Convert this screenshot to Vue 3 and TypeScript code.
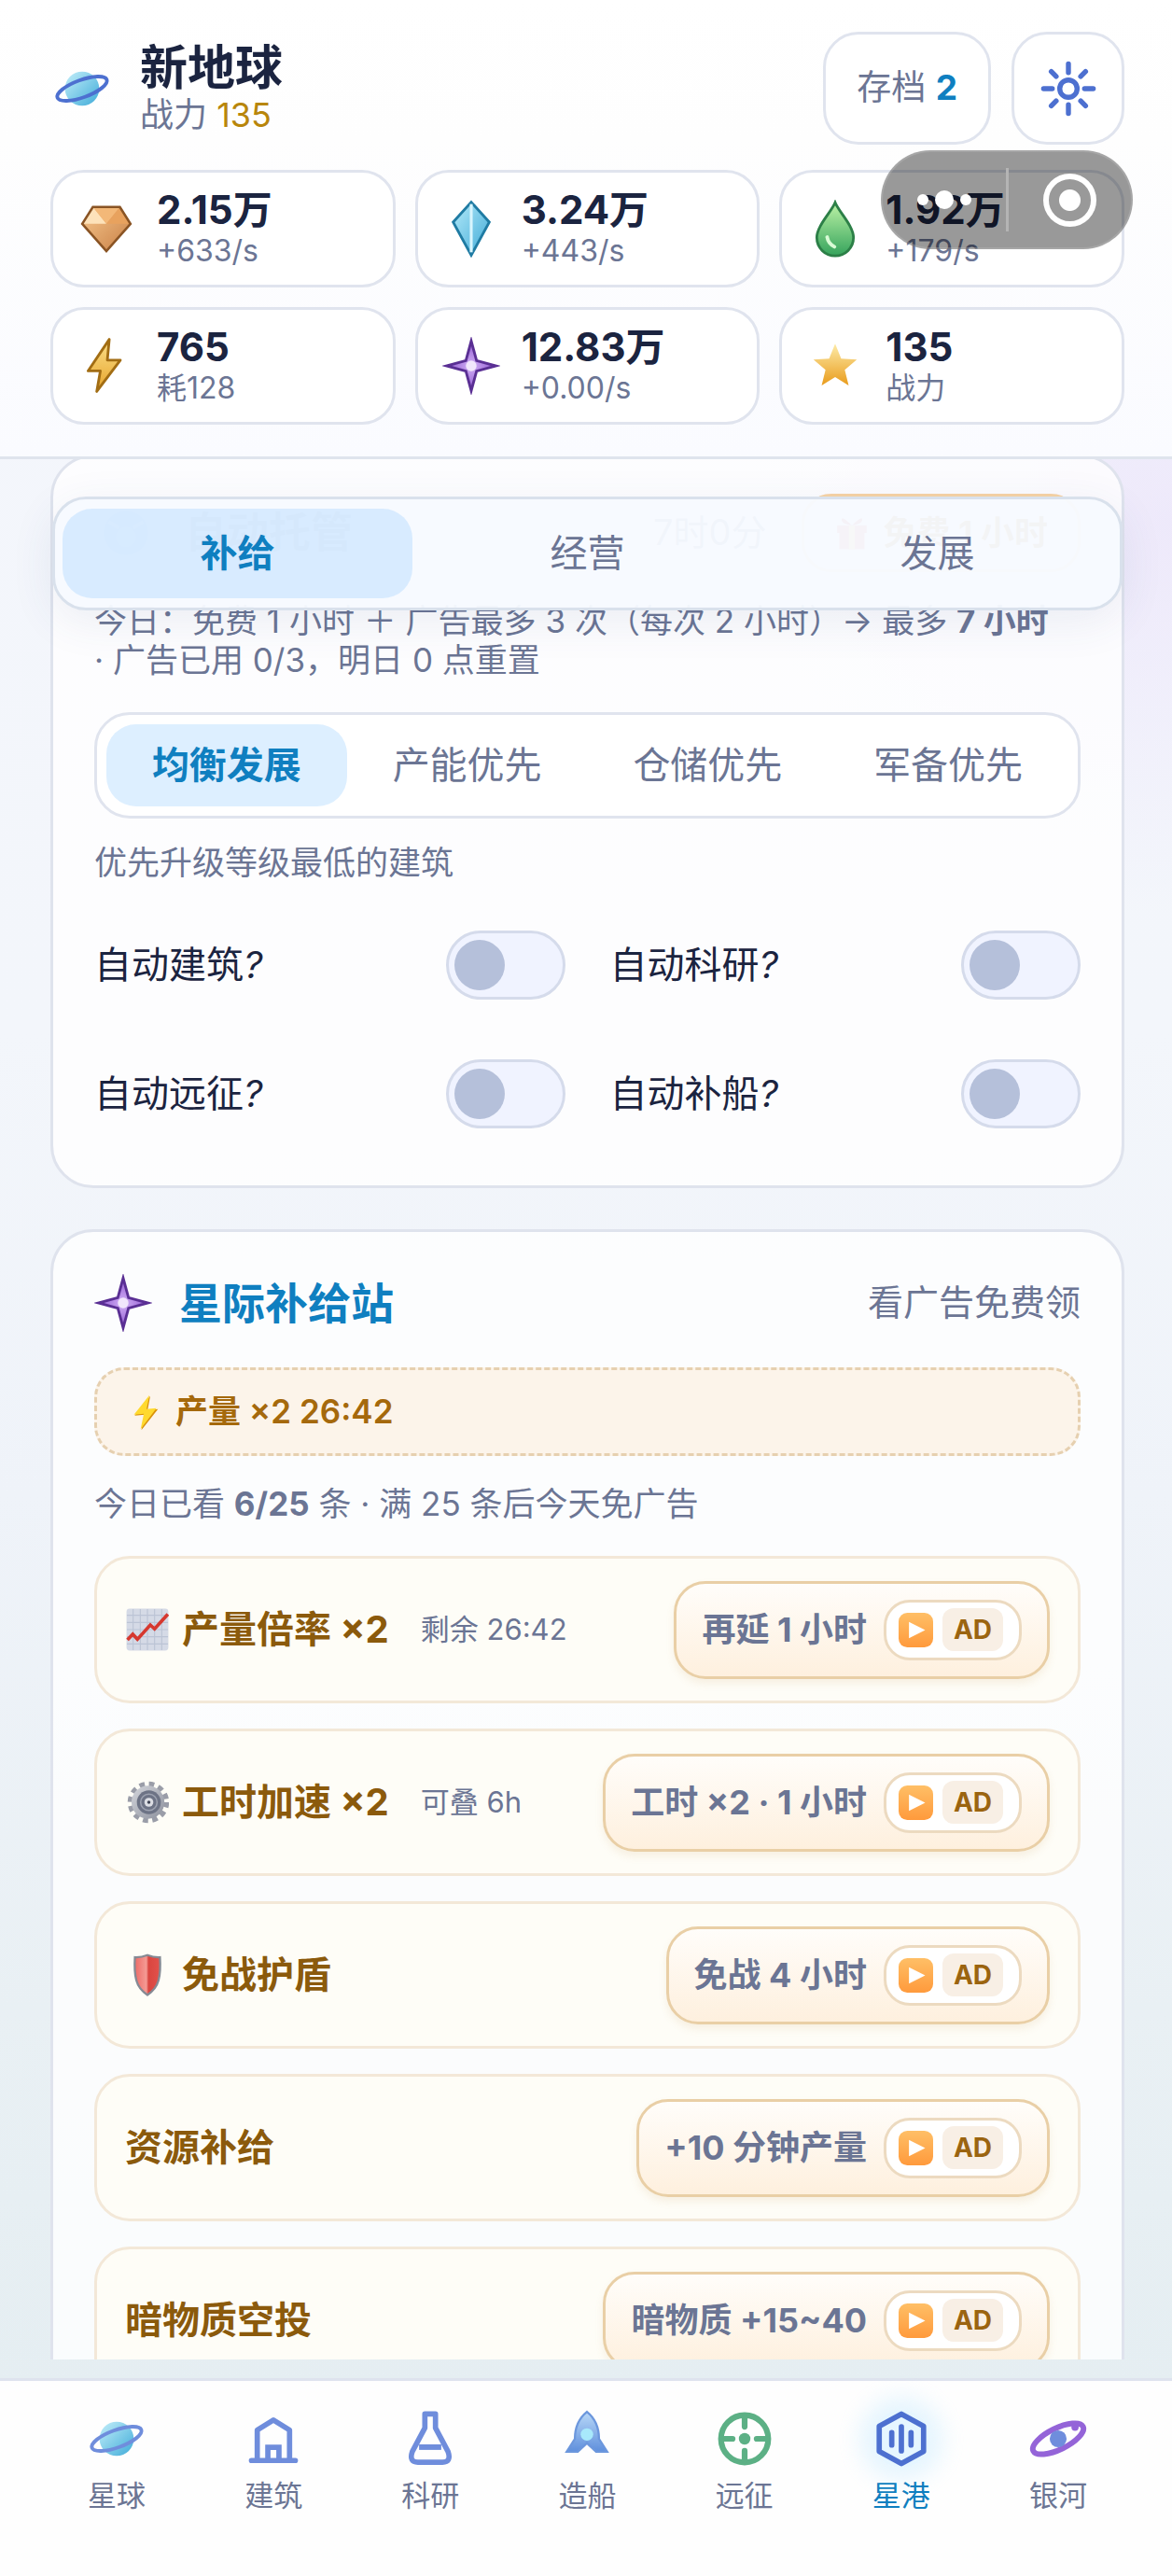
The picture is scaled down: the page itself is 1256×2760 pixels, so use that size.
<script setup lang="ts">
import { reactive, ref } from 'vue'

interface Resource { icon: string; value: string; note: string }
interface Supply { icon?: string; title: string; note?: string; action: string }
interface NavItem { icon: string; label: string }

const resources: Resource[] = [
  { icon: 'gem', value: '2.15万', note: '+633/s' },
  { icon: 'crystal', value: '3.24万', note: '+443/s' },
  { icon: 'drop', value: '1.92万', note: '+179/s' },
  { icon: 'bolt', value: '765', note: '耗128' },
  { icon: 'nova', value: '12.83万', note: '+0.00/s' },
  { icon: 'star', value: '135', note: '战力' },
]

const tabs = ['补给', '经营', '发展']
const activeTab = ref('补给')

const strategies = ['均衡发展', '产能优先', '仓储优先', '军备优先']
const activeStrategy = ref('均衡发展')

const switches = reactive([
  { label: '自动建筑', on: false },
  { label: '自动科研', on: false },
  { label: '自动远征', on: false },
  { label: '自动补船', on: false },
])

const supplies: Supply[] = [
  { icon: 'chart', title: '产量倍率 ×2', note: '剩余 26:42', action: '再延 1 小时' },
  { icon: 'cog', title: '工时加速 ×2', note: '可叠 6h', action: '工时 ×2 · 1 小时' },
  { icon: 'shield', title: '免战护盾', action: '免战 4 小时' },
  { title: '资源补给', action: '+10 分钟产量' },
  { title: '暗物质空投', action: '暗物质 +15~40' },
]

const navItems: NavItem[] = [
  { icon: 'planet', label: '星球' },
  { icon: 'building', label: '建筑' },
  { icon: 'flask', label: '科研' },
  { icon: 'rocket', label: '造船' },
  { icon: 'target', label: '远征' },
  { icon: 'port', label: '星港' },
  { icon: 'galaxy', label: '银河' },
]
const activeNav = ref('星港')
</script>

<template>
  <div class="app">
    <svg class="sprite" aria-hidden="true">
      <defs>
        <linearGradient id="g-planet" x1="0" y1="0" x2="1" y2="1">
          <stop offset="0" stop-color="#c4effa" /><stop offset="1" stop-color="#3fabd8" />
        </linearGradient>
        <linearGradient id="g-gem" x1="0" y1="0" x2="1" y2="1">
          <stop offset="0" stop-color="#f7c88e" /><stop offset="1" stop-color="#c87f45" />
        </linearGradient>
        <linearGradient id="g-crystal" x1="0" y1="0" x2="1" y2="1">
          <stop offset="0" stop-color="#b5ebfa" /><stop offset="1" stop-color="#3fa9d6" />
        </linearGradient>
        <linearGradient id="g-drop" x1="0" y1="0" x2="0" y2="1">
          <stop offset="0" stop-color="#bdf3a6" /><stop offset="1" stop-color="#35a35c" />
        </linearGradient>
        <linearGradient id="g-bolt" x1="0" y1="0" x2="0" y2="1">
          <stop offset="0" stop-color="#fbe08a" /><stop offset="1" stop-color="#e6a32a" />
        </linearGradient>
        <radialGradient id="g-nova">
          <stop offset="0" stop-color="#d2b0f6" /><stop offset="1" stop-color="#8f58cf" />
        </radialGradient>
        <linearGradient id="g-star" x1="0" y1="0" x2="0" y2="1">
          <stop offset="0" stop-color="#fdeba8" /><stop offset="1" stop-color="#e99c1c" />
        </linearGradient>
        <linearGradient id="g-rocket" x1="0" y1="0" x2="0" y2="1">
          <stop offset="0" stop-color="#b9d9f8" /><stop offset="1" stop-color="#5f8fdc" />
        </linearGradient>
        <linearGradient id="g-play" x1="0" y1="0" x2="0" y2="1">
          <stop offset="0" stop-color="#ffbf66" /><stop offset="1" stop-color="#ff9a3c" />
        </linearGradient>
        <linearGradient id="g-shield" x1="0" y1="0" x2="1" y2="0">
          <stop offset="0" stop-color="#ee6a66" /><stop offset=".46" stop-color="#f49b94" />
          <stop offset=".54" stop-color="#d9453f" /><stop offset="1" stop-color="#e2524c" />
        </linearGradient>
        <linearGradient id="g-cog" x1="0" y1="0" x2="1" y2="1">
          <stop offset="0" stop-color="#d4d6dc" /><stop offset="1" stop-color="#8d919d" />
        </linearGradient>
      </defs>
      <symbol id="i-planet" viewBox="0 0 24 24">
        <circle cx="12" cy="12" r="7.1" fill="url(#g-planet)" />
        <ellipse cx="12" cy="12" rx="10.9" ry="3.6" transform="rotate(-20 12 12)" fill="none" stroke="currentColor" stroke-width="1.5" />
      </symbol>
      <symbol id="i-gem" viewBox="0 0 24 24">
        <path d="M6.4 3h11.2L22 10 12 21.3 2 10z" fill="url(#g-gem)" />
        <path d="M6.4 3L12 10H2z" fill="#fde2ba" />
        <path d="M6.4 3h11.2L12 10z" fill="#f3b878" />
        <path d="M17.6 3L22 10H12z" fill="#e8a25e" />
        <path d="M6.4 3h11.2L22 10 12 21.3 2 10z" fill="none" stroke="#8a5424" stroke-width="1" />
      </symbol>
      <symbol id="i-crystal" viewBox="0 0 24 24">
        <path d="M12 1l7.5 8.3L12 23 4.5 9.3z" fill="url(#g-crystal)" stroke="#1f7ba3" stroke-width="1.1" />
        <path d="M12 1.8v20" stroke="#d8f5fd" stroke-width="1.2" />
      </symbol>
      <symbol id="i-drop" viewBox="0 0 24 24">
        <path d="M12 1.2C10.5 5 4.4 10.8 4.4 15.7a7.6 7.6 0 0 0 15.2 0C19.6 10.8 13.5 5 12 1.2z" fill="url(#g-drop)" stroke="#2c7f47" stroke-width="1.1" />
        <path d="M8.7 15.5q.4 2.7 3 4" fill="none" stroke="#d9fbd5" stroke-width="1.5" stroke-linecap="round" />
      </symbol>
      <symbol id="i-bolt" viewBox="0 0 24 24">
        <path d="M13.2 1l-.8 8.6h5.4L8 22.6l1.5-8.5H4.4z" fill="url(#g-bolt)" stroke="#a26d13" stroke-width="1.1" stroke-linejoin="round" />
      </symbol>
      <symbol id="i-nova" viewBox="-1 -1 26 26">
        <path d="M12 .8l2.4 8.8 8.8 2.4-8.8 2.4L12 23.2l-2.4-8.8L.8 12l8.8-2.4z" fill="url(#g-nova)" stroke="#5a2f94" stroke-width="1.2" stroke-miterlimit="10" />
        <circle cx="12" cy="12" r="2.4" fill="#f1e6fc" />
      </symbol>
      <symbol id="i-star" viewBox="0 0 24 24">
        <path d="M12 2.8l2.5 6.2 6.5.4-5 4.2 1.6 6.5L12 16.6l-5.6 3.5L8 13.6 3 9.4l6.500-.4z" fill="url(#g-star)" />
      </symbol>
      <symbol id="i-gear" viewBox="0 0 24 24">
        <g fill="none" stroke="currentColor" stroke-width="2.1" stroke-linecap="round">
          <circle cx="12" cy="12" r="3.6" />
          <path d="M12 1.7v3.600M12 18.7v3.600M1.7 12h3.600M18.7 12h3.600M4.900 4.900l2 2M17.100 17.100l2 2M4.900 19.100l2-2M17.100 6.900l2-2" />
        </g>
      </symbol>
      <symbol id="i-building" viewBox="0 0 24 24">
        <g fill="none" stroke="currentColor" stroke-width="2.2" stroke-linecap="round" stroke-linejoin="round">
          <path d="M5.300 20.800V8.400L12 4.200l6.700 4.200v12.400M2.900 21h18.200" />
          <path d="M9.700 20.500v-5h4.600v5" stroke-linejoin="miter" />
        </g>
      </symbol>
      <symbol id="i-flask" viewBox="0 0 24 24">
        <path d="M9.800 1.700h4.400v5.800l5.200 9.800q1.500 4.400-2.300 4.400H6.900q-3.800 0-2.300-4.400l5.200-9.800z" fill="none" stroke="currentColor" stroke-width="2.2" stroke-linejoin="round" />
        <path d="M7.400 14.300h9.200v2.300H7.400z" fill="currentColor" />
      </symbol>
      <symbol id="i-rocket" viewBox="0 0 24 24">
        <path d="M12 .8C8.500 3.600 7 7.800 7 12L3.600 17.400h4.600L12 13.800l3.800 3.600h4.600L17 12c0-4.200-1.500-8.400-5-11.200z" fill="url(#g-rocket)" stroke="#6c97dd" stroke-width=".9" />
        <circle cx="12" cy="10.200" r="2.600" fill="#a8e9fb" />
      </symbol>
      <symbol id="i-target" viewBox="0 0 24 24">
        <g fill="none" stroke="#5cb085" stroke-width="2.4">
          <circle cx="12" cy="12" r="9.800" />
          <path d="M12 3v4M12 17v4M3 12h4M17 12h4" stroke-linecap="round" />
        </g>
        <circle cx="12" cy="12" r="2.400" fill="#5cb085" />
      </symbol>
      <symbol id="i-port" viewBox="0 0 24 24">
        <g fill="none" stroke="#4d70d0" stroke-width="2.2" stroke-linejoin="round" stroke-linecap="round">
          <path d="M12 1.700l9.200 5.100v10.400L12 22.300l-9.200-5.100V6.800z" />
          <path d="M12 7v10M8 9.400v5.200M16 9.400v5.200" />
        </g>
      </symbol>
      <symbol id="i-galaxy" viewBox="0 0 24 24">
        <ellipse cx="12" cy="12" rx="11.500" ry="4.400" transform="rotate(-26 12 12)" fill="none" stroke="#9464d8" stroke-width="2.3" />
        <circle cx="12" cy="12" r="3.500" fill="#6f8ddc" />
        <circle cx="19" cy="7.200" r="1.500" fill="#9464d8" />
      </symbol>
      <symbol id="i-spark" viewBox="0 0 24 24">
        <path d="M14.500 1L4.500 13.600l6.400-.6L8.800 23l10.700-13.600-6.700.8z" fill="#d9920a" transform="translate(.5 .6)" />
        <path d="M14.500 1L4.500 13.600l6.400-.6L8.800 23l10.200-13.600-6.400.6z" fill="#ffd92e" />
      </symbol>
      <symbol id="i-chart" viewBox="0 0 24 24">
        <rect x=".3" y=".3" width="23.4" height="23.4" rx="1.8" fill="#d5dae6" />
        <path d="M4 .5v23M8 .5v23M12 .5v23M16 .5v23M20 .5v23M.5 4h23M.5 8h23M.5 12h23M.5 16h23M.5 20h23" stroke="#bcc4d5" stroke-width=".6" />
        <path d="M.8 17.800L3.800 14.600 6.400 17.400 13.600 9.400 16 11.600 23.400 3.400" fill="none" stroke="#d6382f" stroke-width="1.9" />
      </symbol>
      <symbol id="i-cog" viewBox="0 0 24 24">
        <circle cx="12.500" cy="12" r="10" fill="none" stroke="#9a9da8" stroke-width="3.2" stroke-dasharray="2.900 2.340" />
        <circle cx="12.300" cy="12" r="9.200" fill="url(#g-cog)" />
        <circle cx="12.800" cy="12" r="6.700" fill="#6d7385" />
        <circle cx="12.800" cy="12" r="4.600" fill="none" stroke="#9da2b0" stroke-width=".8" />
        <circle cx="12.800" cy="12" r="2.500" fill="#dcdee4" />
        <circle cx="12.800" cy="12" r=".9" fill="#3f4454" />
      </symbol>
      <symbol id="i-shield" viewBox="0 0 24 24">
        <path d="M12 .9q3.600 1.400 7 1.200.5 8-.8 12.900T12 23.200q-4.900-3.300-6.200-8.200T5 2.100Q8.400 2.300 12 .9z" fill="url(#g-shield)" stroke="#858a94" stroke-width="1.2" />
      </symbol>
      <symbol id="i-robot" viewBox="0 0 24 24">
        <circle cx="12" cy="12" r="11" fill="#5c7fd8" />
        <path d="M3.500 6.500l5 3M20.500 6.500l-5 3" stroke="#fff" stroke-width="1.8" />
        <circle cx="12" cy="14" r="5" fill="#b9cdf5" />
      </symbol>
      <symbol id="i-gift" viewBox="0 0 24 24">
        <path d="M2 7h20v5H2zM3.500 12h17v11h-17z" fill="#e0554f" />
        <path d="M10 7h4v16h-4z" fill="#f3c64c" />
        <path d="M12 7Q5 6 5 3t7 4q7-7 7-4t-7 4z" fill="#c8413c" />
      </symbol>
      <symbol id="i-play" viewBox="0 0 24 24">
        <rect width="24" height="24" rx="6" fill="url(#g-play)" />
        <path d="M7.200 6.400v11.200L18.500 12z" fill="#fff" />
      </symbol>
    </svg>

    <header class="top">
      <div class="brand-row">
        <svg class="icon brand-icon"><use href="#i-planet" /></svg>
        <div class="brand">
          <h1>新地球</h1>
          <p>战力 <span class="gold">135</span></p>
        </div>
        <button class="box-btn save" type="button">存档 <b>2</b></button>
        <button class="box-btn gear" type="button" aria-label="设置">
          <svg class="icon"><use href="#i-gear" /></svg>
        </button>
      </div>
      <ul class="resources">
        <li v-for="r in resources" :key="r.icon">
          <svg class="icon"><use :href="'#i-' + r.icon" /></svg>
          <div>
            <strong>{{ r.value }}</strong>
            <small>{{ r.note }}</small>
          </div>
        </li>
      </ul>
      <div class="capsule">
        <button type="button" aria-label="更多">
          <i class="dot"></i><i class="dot big"></i><i class="dot"></i>
        </button>
        <span class="bar"></span>
        <button type="button" aria-label="关闭"><i class="ring"></i></button>
      </div>
    </header>

    <main class="stage">
      <div class="scroll">
        <section class="card auto">
          <div class="auto-head">
            <svg class="robot"><use href="#i-robot" /></svg>
            <h2>自动托管</h2>
            <span class="remain">7时0分</span>
            <button class="free" type="button">
              <svg><use href="#i-gift" /></svg>免费 1 小时
            </button>
          </div>
          <p class="hint rule">今日：免费 1 小时 ＋ 广告最多 3 次（每次 2 小时）→ 最多 <b>7 小时</b><br>· 广告已用 0/3，明日 0 点重置</p>
          <div class="segment">
            <button
              v-for="s in strategies" :key="s" type="button"
              :class="{ active: s === activeStrategy }" @click="activeStrategy = s"
            >{{ s }}</button>
          </div>
          <p class="hint">优先升级等级最低的建筑</p>
          <div class="switches">
            <label v-for="s in switches" :key="s.label">
              <span>{{ s.label }}<em>?</em></span>
              <input v-model="s.on" type="checkbox">
            </label>
          </div>
        </section>

        <section class="card supply">
          <div class="supply-head">
            <svg class="icon"><use href="#i-nova" /></svg>
            <h2>星际补给站</h2>
            <span>看广告免费领</span>
          </div>
          <div class="buff"><svg><use href="#i-spark" /></svg>产量 ×2 26:42</div>
          <p class="hint">今日已看 <b>6/25</b> 条 · 满 25 条后今天免广告</p>
          <ul class="offers">
            <li v-for="o in supplies" :key="o.title">
              <svg v-if="o.icon"><use :href="'#i-' + o.icon" /></svg>
              <strong>{{ o.title }}</strong>
              <small v-if="o.note">{{ o.note }}</small>
              <button type="button">
                {{ o.action }}
                <span class="ad"><svg><use href="#i-play" /></svg><span>AD</span></span>
              </button>
            </li>
          </ul>
        </section>
      </div>

      <div class="tabs">
        <button
          v-for="t in tabs" :key="t" type="button"
          :class="{ active: t === activeTab }" @click="activeTab = t"
        >{{ t }}</button>
      </div>
    </main>

    <nav class="nav">
      <a
        v-for="n in navItems" :key="n.label" href="#"
        :class="{ active: n.label === activeNav }" @click.prevent="activeNav = n.label"
      >
        <svg class="icon"><use :href="'#i-' + n.icon" /></svg>
        <span>{{ n.label }}</span>
      </a>
    </nav>
  </div>
</template>

<style>
body {
  margin: 0;
}
</style>

<style scoped>
.app {
  display: flex;
  flex-direction: column;
  height: 100vh;
  overflow: hidden;
  color: #1b2440;
  font-family: Inter, "Noto Sans CJK SC", sans-serif;
  line-height: 1.25;
  background:
    radial-gradient(ellipse 560px 420px at 100% 560px, rgba(232, 220, 250, .5), rgba(232, 220, 250, 0)),
    linear-gradient(180deg, #f4f6fc 0, #f3f6fb 40%, #eff3f9 58%, #e9f0f4 78%, #e3edf1 100%);
}
.app * {
  box-sizing: border-box;
}
h1, h2, p, ul {
  margin: 0;
  padding: 0;
  list-style: none;
}
button {
  margin: 0;
  padding: 0;
  border: 0;
  background: none;
  color: inherit;
  font: inherit;
  cursor: pointer;
}
.sprite {
  position: absolute;
  width: 0;
  height: 0;
}
.icon {
  flex: none;
  width: 62px;
  height: 62px;
  overflow: visible;
}

/* header */
.top {
  position: relative;
  flex: none;
  padding: 34px 51px 34px 54px;
  border-bottom: 3px solid #dfe4ed;
  background: linear-gradient(180deg, #fff 0, #fefefe 30%, #fafbff 100%);
}
.brand-row {
  display: flex;
  align-items: center;
  margin-bottom: 27px;
}
.brand-icon {
  margin: 0 31px 0 3px;
  color: #4d70d0;
}
.brand {
  flex: 1;
}
.brand h1 {
  font-size: 51px;
  line-height: 56px;
  font-weight: 700;
}
.brand p {
  font-size: 36px;
  line-height: 44px;
  color: #6b7594;
}
.gold {
  color: #b8860b;
}
.box-btn {
  height: 121px;
  border: 3px solid #e0e4ee;
  border-radius: 38px;
  background: #fff;
}
.save {
  padding: 0 33px;
  color: #6b7594;
  font-size: 37px;
}
.save b {
  color: #0f7fc0;
}
.gear {
  display: grid;
  place-items: center;
  width: 121px;
  margin-left: 22px;
  color: #4d70d0;
}
.resources {
  display: grid;
  grid-template-columns: repeat(3, 1fr);
  gap: 21px;
}
.resources li {
  display: flex;
  align-items: center;
  gap: 23px;
  height: 126px;
  padding: 0 26px;
  border: 3px solid #e0e4ee;
  border-radius: 36px;
  background: #fff;
}
.resources strong {
  display: block;
  font-size: 42px;
  line-height: 48px;
}
.resources small {
  display: block;
  font-size: 32px;
  line-height: 40px;
  color: #6b7594;
}
.capsule {
  position: absolute;
  top: 161px;
  right: 42px;
  display: flex;
  align-items: center;
  width: 270px;
  height: 106px;
  border: 2px solid rgba(190, 190, 190, .35);
  border-radius: 53px;
  background: rgba(0, 0, 0, .4);
}
.capsule button {
  flex: 1;
  display: flex;
  align-items: center;
  justify-content: center;
  gap: 7px;
}
.capsule .bar {
  width: 3px;
  height: 68px;
  background: #b4b4b4;
}
.dot {
  width: 12px;
  height: 12px;
  border-radius: 50%;
  background: #fff;
}
.dot.big {
  width: 20px;
  height: 20px;
}
.ring {
  width: 57px;
  height: 57px;
  border: 6px solid #fff;
  border-radius: 50%;
  background: radial-gradient(circle, #fff 11px, transparent 12px);
}

/* scrolling area */
.stage {
  position: relative;
  flex: 1;
  min-height: 0;
  margin-bottom: 20px;
}
.scroll {
  height: 100%;
  padding: 0 51px 0 54px;
  overflow-y: auto;
  scrollbar-width: none;
}
.card {
  padding: 0 44px;
  border: 3px solid #dfe3ed;
  border-radius: 46px;
  background: rgba(255, 255, 255, .8);
}
.tabs {
  position: absolute;
  top: 40px;
  left: 56px;
  right: 53px;
  display: flex;
  padding: 10px 8px;
  border: 3px solid #d9e1ec;
  border-radius: 36px;
  background: rgba(247, 250, 255, .96);
  box-shadow: 0 12px 48px rgba(60, 80, 130, .09);
}
.tabs button {
  flex: 1;
  height: 96px;
  border-radius: 32px;
  font-size: 40px;
  color: #6b7594;
}
.tabs .active {
  background: rgba(199, 228, 255, .65);
  color: #0f7fc0;
  font-weight: 700;
}
.auto {
  margin-top: -5px;
  padding-top: 39px;
  padding-bottom: 61px;
}
.auto-head {
  display: flex;
  align-items: center;
  height: 84px;
  margin-bottom: 31px;
}
.robot {
  width: 52px;
  height: 52px;
  margin: 0 37px 0 8px;
}
.auto-head h2 {
  flex: 1;
  font-size: 45px;
}
.remain {
  margin-right: 38px;
  font-size: 38px;
  color: #6b7594;
}
.free {
  display: flex;
  align-items: center;
  gap: 14px;
  height: 84px;
  padding: 0 32px;
  border: 3px solid #f7d3a4;
  border-radius: 32px;
  font-size: 36px;
  font-weight: 700;
  color: #a0650c;
}
.free svg {
  width: 38px;
  height: 38px;
}
.hint {
  font-size: 35px;
  line-height: 42px;
  color: #6b7594;
}
.rule {
  white-space: nowrap;
}
.segment {
  display: flex;
  margin: 35px 0 26px;
  padding: 10px;
  border: 3px solid #e0e4ee;
  border-radius: 38px;
  background: #fff;
}
.segment button {
  flex: 1;
  height: 88px;
  border-radius: 32px;
  font-size: 40px;
  color: #6b7594;
}
.segment .active {
  background: #ddefff;
  color: #0f7fc0;
  font-weight: 700;
}
.switches {
  display: grid;
  grid-template-columns: 1fr 1fr;
  gap: 64px 48px;
  margin-top: 52px;
}
.switches label {
  display: flex;
  align-items: center;
  justify-content: space-between;
  height: 74px;
  font-size: 40px;
}
.switches input {
  appearance: none;
  display: flex;
  align-items: center;
  width: 128px;
  height: 74px;
  margin: 0;
  padding: 0 6px;
  border: 3px solid #d5dbeb;
  border-radius: 37px;
  background: #f0f3ff;
}
.switches input::before {
  content: "";
  width: 54px;
  height: 54px;
  border-radius: 50%;
  background: #b5c0da;
}
.switches input:checked {
  justify-content: flex-end;
  background: #bfe2fb;
}

/* supply station */
.supply {
  margin-top: 44px;
  padding-top: 44px;
  padding-bottom: 44px;
}
.supply-head {
  display: flex;
  align-items: center;
  height: 64px;
  margin-bottom: 37px;
}
.supply-head h2 {
  flex: 1;
  margin-left: 29px;
  font-size: 46px;
  line-height: 64px;
  color: #0f7fc0;
}
.supply-head span {
  font-size: 38px;
  color: #6b7594;
}
.buff {
  display: flex;
  align-items: center;
  height: 95px;
  margin-bottom: 30px;
  padding: 0 32px;
  border: 3px dashed #e6d0b0;
  border-radius: 32px;
  background: #fcf4ea;
  font-size: 35px;
  font-weight: 600;
  color: #a5690c;
}
.buff svg {
  width: 40px;
  height: 40px;
  margin-right: 12px;
}
.offers {
  display: grid;
  gap: 27px;
  margin-top: 35px;
}
.offers li {
  display: flex;
  align-items: center;
  height: 158px;
  padding: 0 30px;
  border: 3px solid #f3e8d8;
  border-radius: 38px;
  background: #fefdf7;
}
.offers li > svg {
  width: 46px;
  height: 46px;
  margin: 0 14px 0 1px;
}
.offers strong {
  font-size: 40px;
  color: #8b5a0c;
}
.offers small {
  margin-left: 34px;
  font-size: 31px;
  color: #6b7594;
}
.offers button {
  display: flex;
  align-items: center;
  gap: 18px;
  height: 105px;
  margin-left: auto;
  padding: 0 27px;
  border: 3px solid #e9cfa6;
  border-radius: 34px;
  background: linear-gradient(180deg, #fffdfa, #fef0de);
  box-shadow: 0 5px 8px rgba(200, 150, 80, .12);
  color: #6b7594;
  font-size: 36px;
  font-weight: 700;
}
.ad {
  display: flex;
  align-items: center;
  gap: 10px;
  height: 65px;
  padding: 0 17px 0 13px;
  border: 3px solid #ecdac0;
  border-radius: 28px;
  background: #fff;
}
.ad svg {
  width: 37px;
  height: 37px;
}
.ad span {
  width: 65px;
  border-radius: 12px;
  background: #f8efe5;
  font-size: 28px;
  line-height: 46px;
  text-align: center;
  color: #9b6410;
}

/* bottom navigation */
.nav {
  display: flex;
  flex: none;
  height: 212px;
  padding: 31px 38px 0 41px;
  border-top: 3px solid #dee3ee;
  background: #fefefe;
}
.nav a {
  flex: 1;
  display: flex;
  flex-direction: column;
  align-items: center;
  gap: 10px;
  color: #6b7594;
  font-size: 31px;
  line-height: 40px;
  text-decoration: none;
}
.nav .icon {
  color: #6f8ddc;
}
.nav .active {
  color: #0f7fc0;
}
.nav .active .icon {
  border-radius: 50%;
  background: rgba(214, 240, 255, .6);
  box-shadow: 0 0 24px 14px rgba(214, 240, 255, .6);
}
</style>
